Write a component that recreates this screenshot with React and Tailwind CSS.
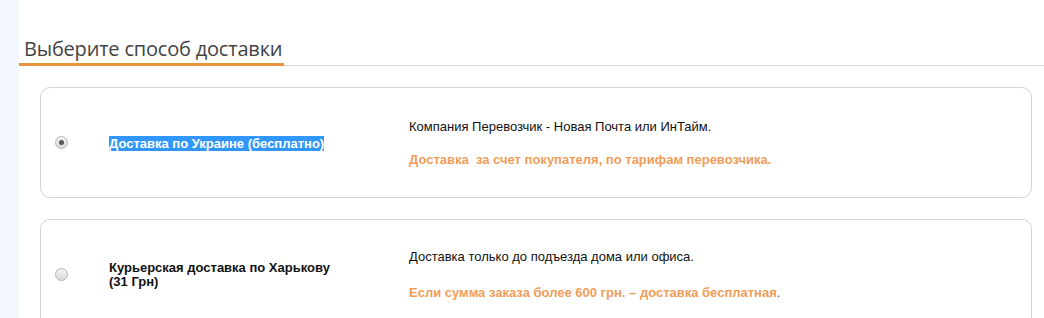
const Radio = ({ checked }) => (
  <span className="w-[13px] h-[13px] rounded-full border border-[#b5b5b5] bg-gradient-to-b from-[#f4f4f4] to-[#d9d9d9] flex items-center justify-center shrink-0">
    {checked && <span className="w-[5px] h-[5px] rounded-full bg-[#555]" />}
  </span>
)

export default function App() {
  return (
    <div className="w-[1044px] h-[318px] overflow-hidden bg-white flex font-['Liberation_Sans',Arial,sans-serif]">
      <div className="w-[19px] bg-[#f2f8fd] shrink-0" />
      <div className="flex-1">
        {/* Title */}
        <div className="flex items-end pt-[35px]">
          <div className="border-b-[3px] border-[#e8923a] pl-[5px] w-[265px] shrink-0">
            <h2 className="font-['Open_Sans',sans-serif] text-[20px] tracking-[-0.2px] leading-[28px] text-[#444] whitespace-nowrap">Выберите способ доставки</h2>
          </div>
          <div className="flex-1 border-b border-[#d8d8d8]" />
        </div>

        {/* Cards */}
        <div className="pl-[21px] pr-[12px] pt-[21px] flex flex-col gap-[21px]">
          <div className="h-[111px] border border-[#d5d5d5] rounded-[10px] flex items-center pl-[14px]">
            <Radio checked />
            <div className="w-[341px] pl-[41px] shrink-0">
              <span className="text-[13px] font-bold leading-[15px] bg-[#3297fd] text-white">Доставка по Украине (бесплатно)</span>
            </div>
            <div className="text-[13px] leading-[15px]">
              <p className="text-[#111]">Компания Перевозчик - Новая Почта или ИнТайм.</p>
              <p className="mt-[18px] font-bold text-[#f19d5a] whitespace-pre">Доставка  за счет покупателя, по тарифам перевозчика.</p>
            </div>
          </div>

          <div className="h-[111px] border border-[#d5d5d5] rounded-[10px] flex items-center pl-[14px]">
            <Radio />
            <div className="w-[341px] pl-[41px] shrink-0">
              <p className="text-[13px] font-bold leading-[14px] text-[#111] max-w-[240px]">Курьерская доставка по Харькову (31 Грн)</p>
            </div>
            <div className="text-[13px] leading-[15px]">
              <p className="text-[#111]">Доставка только до подъезда дома или офиса.</p>
              <p className="mt-[21px] font-bold text-[#f19d5a]">Если сумма заказа более 600 грн. – доставка бесплатная<span className="font-normal text-[#555]">.</span></p>
            </div>
          </div>
        </div>
      </div>
    </div>
  )
}
